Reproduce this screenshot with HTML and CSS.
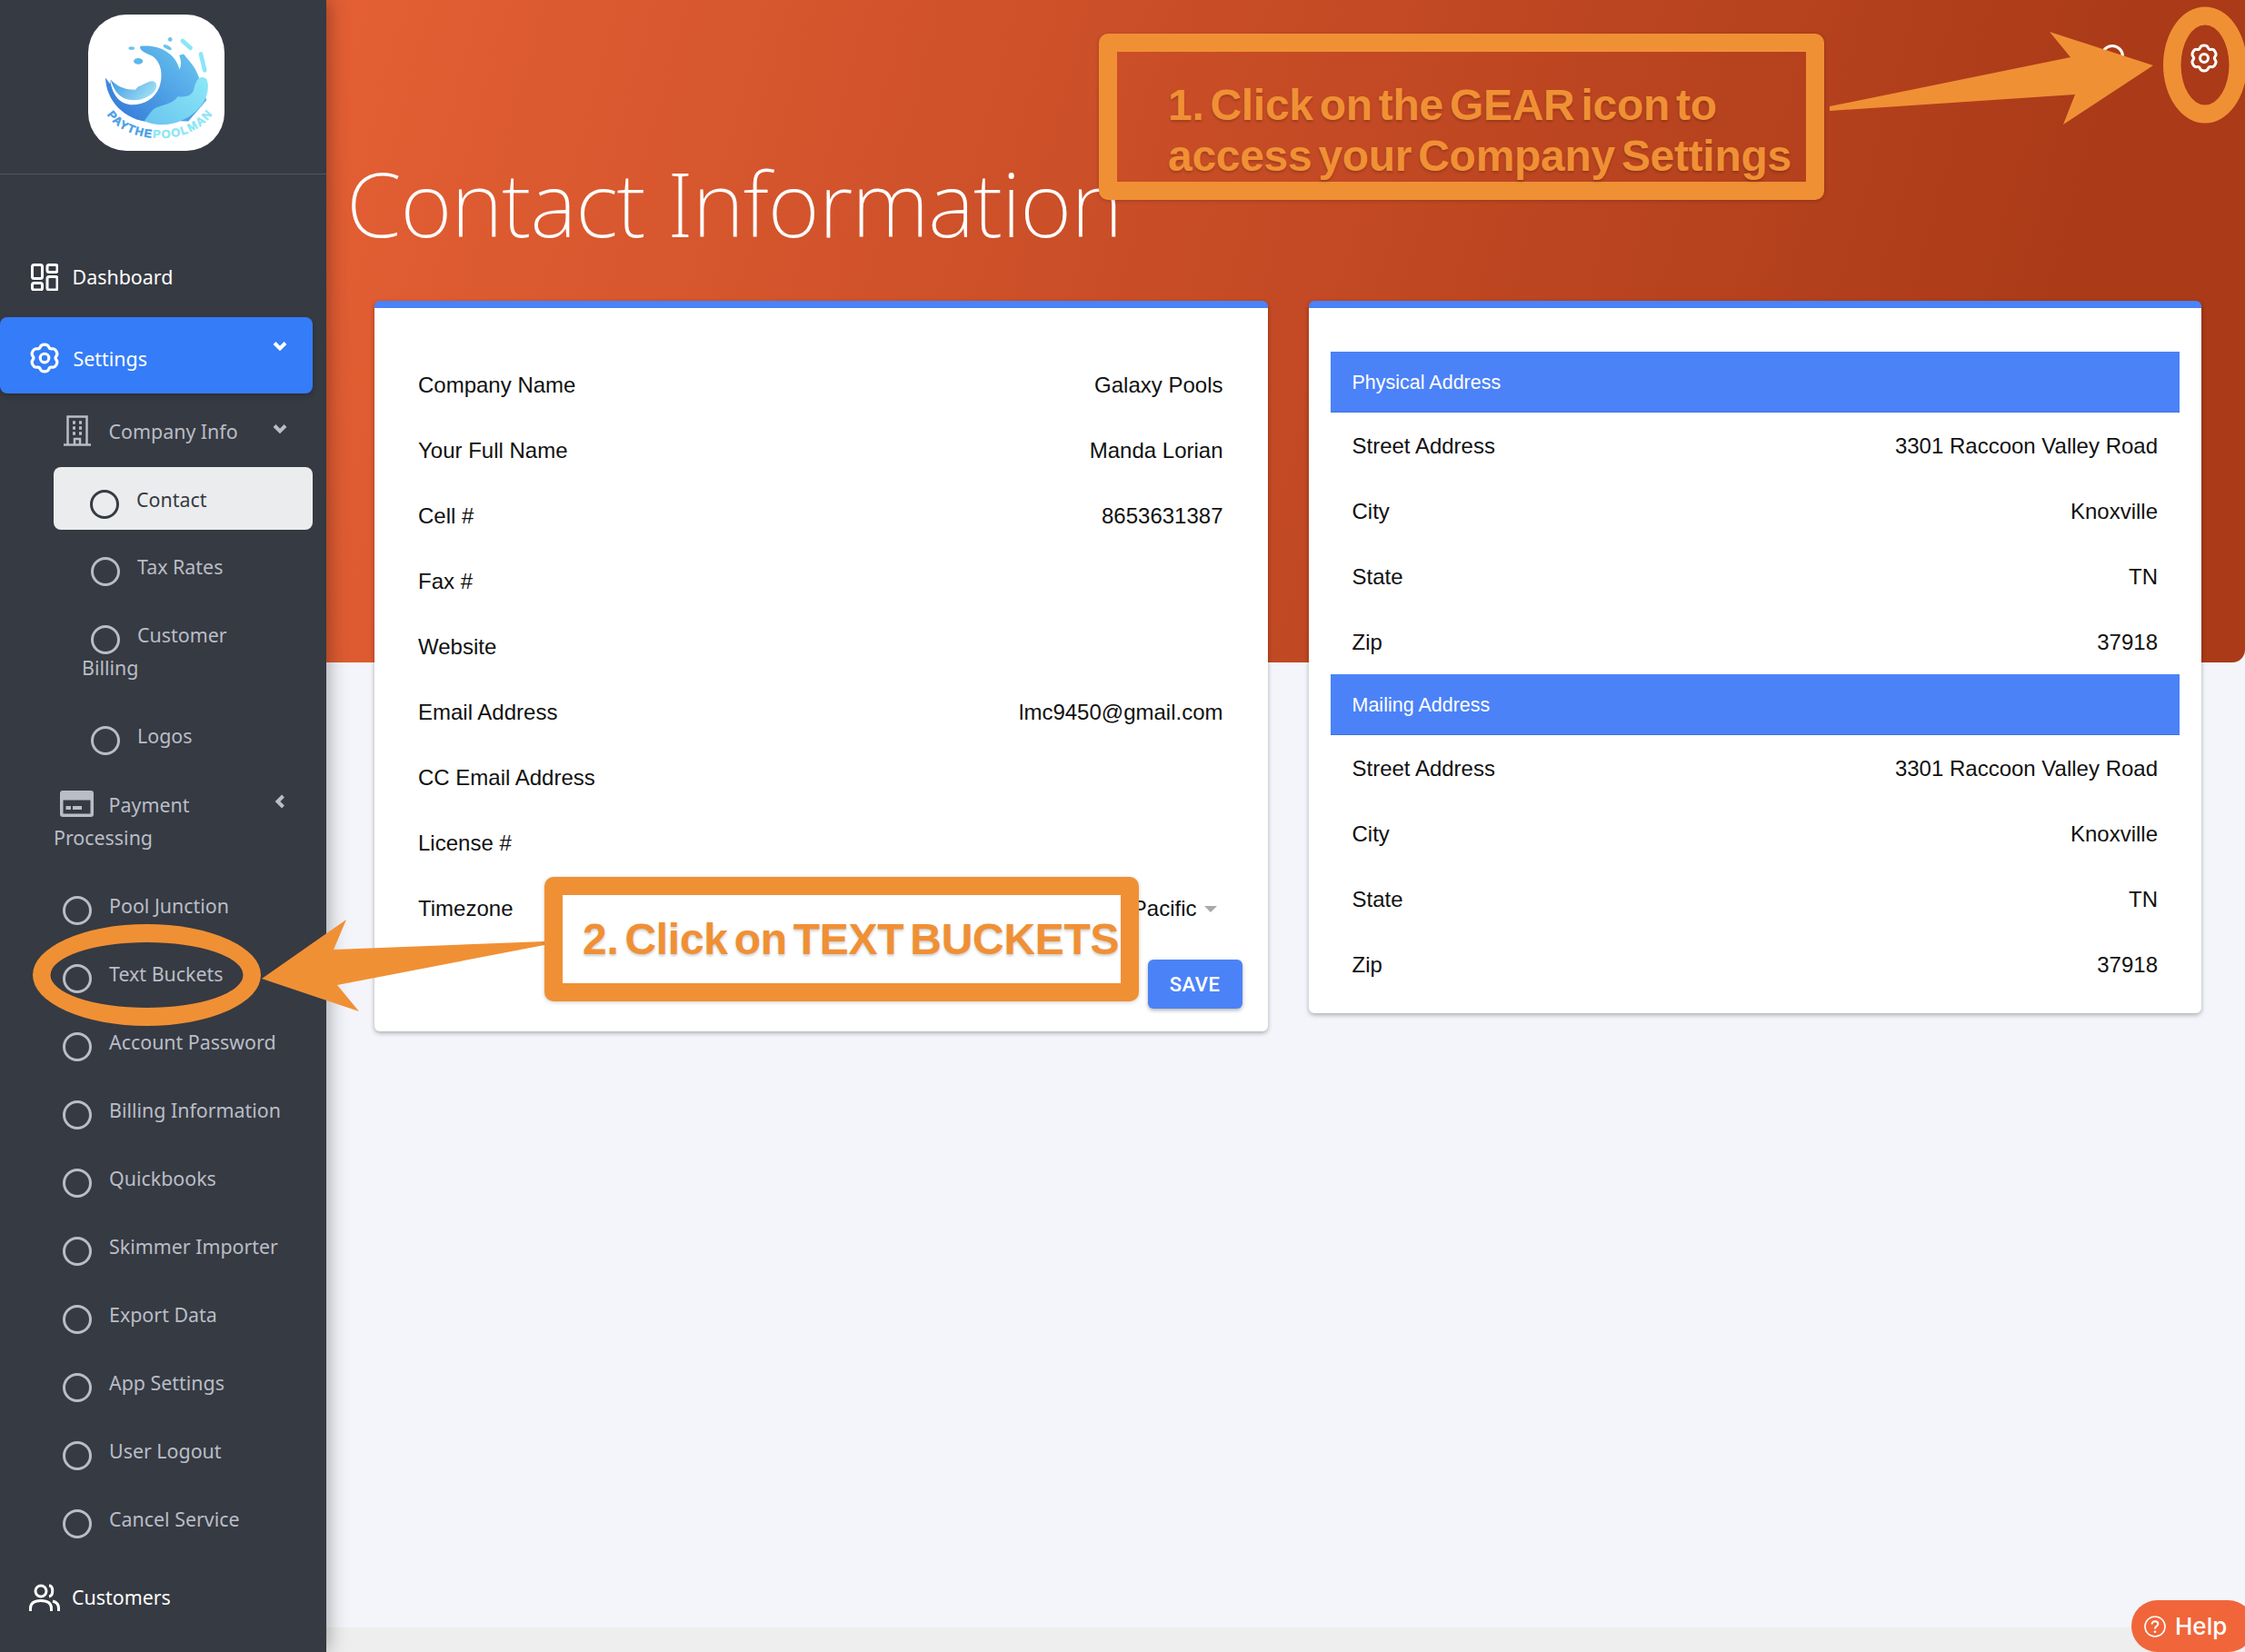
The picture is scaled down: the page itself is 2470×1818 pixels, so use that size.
FILE: index.html
```html
<!DOCTYPE html>
<html lang="en">
<head>
    <meta charset="UTF-8">
    <title>Contact Information</title>
    <link rel="stylesheet" href="styles.css">
</head>
<body>
    <svg class="defs" width="0" height="0">
        <symbol id="gear" viewBox="0 0 32 32">
            <path d="M16 1.93Q19.5 1.93 20.38 4.42Q21.25 6.91 23.84 6.42Q26.43 5.92 28.19 8.96Q29.94 12 28.22 14Q26.5 16 28.22 18Q29.94 20 28.19 23.04Q26.43 26.08 23.84 25.58Q21.25 25.09 20.38 27.58Q19.5 30.07 16 30.07Q12.5 30.07 11.62 27.58Q10.75 25.09 8.16 25.58Q5.57 26.08 3.81 23.04Q2.06 20 3.78 18Q5.5 16 3.78 14Q2.06 12 3.81 8.96Q5.57 5.92 8.16 6.42Q10.75 6.91 11.62 4.42Q12.5 1.93 16 1.93Z" fill="none" stroke="currentColor" stroke-width="3"/>
            <circle cx="16" cy="16" r="4.5" fill="none" stroke="currentColor" stroke-width="3"/>
        </symbol>
        <symbol id="ring" viewBox="0 0 32 32">
            <circle cx="16" cy="16" r="14.5" fill="none" stroke="currentColor" stroke-width="3"/>
        </symbol>
        <symbol id="chevron" viewBox="0 0 16 12">
            <path d="M2 2.5L8 8.5L14 2.5" fill="none" stroke="currentColor" stroke-width="4"/>
        </symbol>
    </svg>

    <div class="app">
        <aside class="sidebar">
            <div class="brand">
                <div class="logo">
                    <svg viewBox="52 48 445 449" width="150" height="150">
                        <defs>
                            <linearGradient id="deep" x1="0" y1="1" x2="1" y2="0">
                                <stop offset="0" stop-color="#2f72d8"/>
                                <stop offset="1" stop-color="#67c4ee"/>
                            </linearGradient>
                            <linearGradient id="inner" x1="0" y1="0" x2="1" y2="0.4">
                                <stop offset="0" stop-color="#3f97e4"/>
                                <stop offset="1" stop-color="#9adcf3"/>
                            </linearGradient>
                            <linearGradient id="mid" x1="0" y1="1" x2="1" y2="0">
                                <stop offset="0" stop-color="#3f8be2"/>
                                <stop offset="1" stop-color="#6cc8f0"/>
                            </linearGradient>
                            <linearGradient id="aqua" x1="0" y1="1" x2="1" y2="0">
                                <stop offset="0" stop-color="#68c4ef"/>
                                <stop offset="1" stop-color="#8ce9f7"/>
                            </linearGradient>
                        </defs>
                        <path d="M107 256C108 330 170 398 255 402C300 404 340 390 365 365L350 225C335 175 285 145 222 152C215 165 240 175 262 185C290 205 298 245 285 285C270 325 235 345 195 345C160 345 130 320 122 262L122 276Z" fill="url(#deep)"/>
                        <path d="M124 262C140 280 165 296 205 296L215 285C235 280 250 265 265 268C278 272 278 290 265 305C240 330 195 338 165 322C145 312 132 290 124 262Z" fill="url(#inner)"/>
                        <path d="M290 345C320 320 325 270 330 226L345 236C355 225 360 210 350 182L365 178C385 205 400 215 415 255L440 330L380 400L250 395Z" fill="url(#mid)"/>
                        <path d="M440 260C415 245 405 265 398 295C390 320 365 320 345 318C330 345 285 345 265 360C250 375 242 390 235 398C290 425 370 410 420 350C445 320 450 285 440 260Z" fill="url(#aqua)"/>
                        <ellipse cx="215" cy="202" rx="15" ry="10" fill="#5cb8ec"/>
                        <ellipse cx="193" cy="159" rx="10" ry="5.5" fill="#6cc3ef"/>
                        <ellipse cx="311" cy="156" rx="15" ry="6" fill="#6cc3ef" transform="rotate(28 311 156)"/>
                        <circle cx="320" cy="130" r="7" fill="#6cc3ef"/>
                        <path d="M361 135L387 158" stroke="#8ae6f7" stroke-width="14" stroke-linecap="round"/>
                        <path d="M421 178L434 232" stroke="#8ae6f7" stroke-width="14" stroke-linecap="round"/>
                        <path id="logo-arc" d="M112 378C170 470 370 490 455 382" fill="none"/>
                        <text class="logo-text"><textPath href="#logo-arc" textLength="395"><tspan fill="#4a9fe8" stroke="#4a9fe8">PAYTHE</tspan><tspan fill="#8ce6f7" stroke="#8ce6f7">POOLMAN</tspan></textPath></text>
                    </svg>
                </div>
            </div>

            <nav class="nav">
                <a class="nav-top">
                    <svg class="dash-icon" viewBox="0 0 30 30" width="30" height="30" fill="none" stroke="currentColor" stroke-width="3">
                        <rect x="1.5" y="1.5" width="11" height="15" rx="2"/>
                        <rect x="18" y="1.5" width="11" height="8" rx="2"/>
                        <rect x="1.5" y="21.5" width="11" height="7.5" rx="2"/>
                        <rect x="18" y="14.5" width="11" height="14.5" rx="2"/>
                    </svg>
                    Dashboard
                </a>
                <a class="nav-top active">
                    <svg class="gear-icon"><use href="#gear"/></svg>
                    Settings
                    <svg class="chevron chevron-active"><use href="#chevron"/></svg>
                </a>

                <a class="sub company-info">
                    <svg class="sub-icon" viewBox="0 0 30 34" fill="none" stroke="currentColor" stroke-width="2.5">
                        <path d="M4.5 32V1.5H25.5V32"/>
                        <path d="M0 32.5H30"/>
                        <path d="M12 32V26H18V32" />
                        <path d="M10 8h3M17 8h3M10 14h3M17 14h3M10 20h3M17 20h3" stroke-width="3.4"/>
                    </svg>
                    Company Info
                    <svg class="chevron"><use href="#chevron"/></svg>
                </a>
                <a class="sub-sub current"><svg class="bullet"><use href="#ring"/></svg>Contact</a>
                <a class="sub-sub"><svg class="bullet"><use href="#ring"/></svg>Tax Rates</a>
                <a class="sub-sub"><svg class="bullet"><use href="#ring"/></svg>Customer Billing</a>
                <a class="sub-sub"><svg class="bullet"><use href="#ring"/></svg>Logos</a>

                <a class="sub">
                    <svg class="sub-icon card-icon" viewBox="0 0 37 29">
                        <path fill-rule="evenodd" fill="currentColor" d="M3 0H34A3 3 0 0 1 37 3V26A3 3 0 0 1 34 29H3A3 3 0 0 1 0 26V3A3 3 0 0 1 3 0ZM3.5 10.5V25.5H33.5V10.5ZM6.5 17H12V21H6.5ZM14 17H24V21H14Z"/>
                    </svg>
                    Payment Processing
                    <svg class="chevron chevron-left"><use href="#chevron"/></svg>
                </a>
                <a class="sub"><svg class="bullet"><use href="#ring"/></svg>Pool Junction</a>
                <a class="sub"><svg class="bullet"><use href="#ring"/></svg>Text Buckets</a>
                <a class="sub"><svg class="bullet"><use href="#ring"/></svg>Account Password</a>
                <a class="sub"><svg class="bullet"><use href="#ring"/></svg>Billing Information</a>
                <a class="sub"><svg class="bullet"><use href="#ring"/></svg>Quickbooks</a>
                <a class="sub"><svg class="bullet"><use href="#ring"/></svg>Skimmer Importer</a>
                <a class="sub"><svg class="bullet"><use href="#ring"/></svg>Export Data</a>
                <a class="sub"><svg class="bullet"><use href="#ring"/></svg>App Settings</a>
                <a class="sub"><svg class="bullet"><use href="#ring"/></svg>User Logout</a>
                <a class="sub"><svg class="bullet"><use href="#ring"/></svg>Cancel Service</a>

                <a class="nav-top customers">
                    <svg class="people-icon" viewBox="0 0 34 30" width="34" height="30" fill="none" stroke="currentColor" stroke-width="3">
                        <circle cx="13" cy="8" r="6"/>
                        <path d="M1.5 30V27C1.5 21 6 18.5 13 18.5C20 18.5 24.5 21 24.5 27V30"/>
                        <path d="M22 1.8C27 2.5 27 13 22 14"/>
                        <path d="M26 19C30 20 32.5 23 32.5 27V30"/>
                    </svg>
                    Customers
                </a>
            </nav>
        </aside>

        <main class="main">
            <header class="page-header">
                <div class="top-icons">
                    <svg class="search-icon" viewBox="0 0 34 34" fill="none" stroke="#fff" stroke-width="3">
                        <circle cx="14" cy="14" r="11.5"/>
                        <path d="M23 23L32 32"/>
                    </svg>
                    <svg class="header-gear"><use href="#gear"/></svg>
                </div>
                <h1>Contact Information</h1>
            </header>

            <div class="cards">
                <section class="card">
                    <div class="rows company">
                        <div class="row"><span>Company Name</span><span>Galaxy Pools</span></div>
                        <div class="row"><span>Your Full Name</span><span>Manda Lorian</span></div>
                        <div class="row"><span>Cell #</span><span>8653631387</span></div>
                        <div class="row"><span>Fax #</span><span></span></div>
                        <div class="row"><span>Website</span><span></span></div>
                        <div class="row"><span>Email Address</span><span>lmc9450@gmail.com</span></div>
                        <div class="row"><span>CC Email Address</span><span></span></div>
                        <div class="row"><span>License #</span><span></span></div>
                        <div class="row"><span>Timezone</span><span class="select">Pacific<i class="caret"></i></span></div>
                    </div>
                    <div class="card-footer">
                        <button class="save">SAVE</button>
                    </div>
                </section>

                <section class="card address">
                    <div class="section-head">Physical Address</div>
                    <div class="row"><span>Street Address</span><span>3301 Raccoon Valley Road</span></div>
                    <div class="row"><span>City</span><span>Knoxville</span></div>
                    <div class="row"><span>State</span><span>TN</span></div>
                    <div class="row"><span>Zip</span><span>37918</span></div>
                    <div class="section-head">Mailing Address</div>
                    <div class="row"><span>Street Address</span><span>3301 Raccoon Valley Road</span></div>
                    <div class="row"><span>City</span><span>Knoxville</span></div>
                    <div class="row"><span>State</span><span>TN</span></div>
                    <div class="row"><span>Zip</span><span>37918</span></div>
                </section>
            </div>

            <footer class="footer"></footer>
        </main>
    </div>

    <a class="help">
        <svg viewBox="0 0 24 24" width="24" height="24" fill="none" stroke="#fff" stroke-width="1.6">
            <circle cx="12" cy="12" r="11"/>
            <path d="M8.6 9.4C8.6 7.4 10.2 6.2 12 6.2C13.9 6.2 15.4 7.4 15.4 9.2C15.4 11.6 12 11.6 12 14.4" stroke-width="2"/>
            <circle cx="12" cy="17.8" r="1.3" fill="#fff" stroke="none"/>
        </svg>
        Help
    </a>

    <!-- annotations drawn on top of the screenshot -->
    <svg class="arrows" viewBox="0 0 2470 1818" width="2470" height="1818">
        <g fill="#f09035">
            <path d="M2013 117L2278 63L2255 35L2369 72L2270 137L2283 104L2013 122Z"/>
            <path fill-rule="evenodd" d="M2426 7.5A46 64 0 0 1 2426 135.5A46 64 0 0 1 2426 7.5ZM2426 27.5A26.5 44 0 0 0 2426 115.5A26.5 44 0 0 0 2426 27.5Z"/>
            <path d="M599 1036L367 1045L381 1012L288 1077L395 1113L371 1084L599 1040Z"/>
            <path fill-rule="evenodd" d="M161.5 1017A125.5 56 0 0 1 161.5 1129A125.5 56 0 0 1 161.5 1017ZM161.5 1037A106 36 0 0 0 161.5 1109A106 36 0 0 0 161.5 1037Z"/>
        </g>
    </svg>
    <div class="callout callout-gear">1. Click on the GEAR icon to<br>access your Company Settings</div>
    <div class="callout callout-buckets">2. Click on TEXT BUCKETS</div>
</body>
</html>
```

FILE: styles.css
```css
* {
    box-sizing: border-box;
}
body {
    margin: 0;
    width: 2470px;
    height: 1818px;
    overflow: hidden;
    position: relative;
    background-color: #f4f5fa;
    color: #111;
    font-family: "Liberation Sans", Arial, sans-serif;
    font-size: 24px;
}
.defs {
    position: absolute;
}
.app {
    display: flex;
    height: 1818px;
}

/* sidebar */
.sidebar {
    width: 359px;
    flex-shrink: 0;
    background-color: #363a42;
    box-shadow: 0 0 22px rgba(0, 0, 0, 0.4);
    position: relative;
    z-index: 2;
    color: #b9bdc7;
    font-family: "Noto Sans", sans-serif;
    font-size: 21.4px;
    line-height: 36px;
}
.brand {
    height: 192px;
    padding: 16px 0 0 97px;
    border-bottom: 1px solid #52565e;
}
.logo {
    width: 150px;
    height: 150px;
    background-color: #fff;
    border-radius: 42px;
    overflow: hidden;
}
.logo svg {
    display: block;
}
.logo-text {
    font-family: "Liberation Sans", sans-serif;
    font-weight: bold;
    font-size: 38px;
    stroke-width: 1.5px;
}
.nav {
    padding-top: 70px;
}
.nav a {
    display: block;
    position: relative;
}
.nav-top {
    color: #fff;
    height: 84px;
    padding: 25px 0 0 34px;
    width: 344px;
    margin-bottom: 3px;
    border-radius: 8px;
}
.nav-top.active {
    background-color: #347cf8;
    padding-top: 28px;
    box-shadow: 0 3px 6px rgba(0, 0, 0, 0.2);
}
.nav-top.customers {
    margin-top: 10px;
    padding-top: 22px;
}
.dash-icon, .people-icon, .gear-icon {
    vertical-align: middle;
    margin: -8px 10px -4px 0;
}
.gear-icon {
    width: 34px;
    height: 34px;
    margin: -10px 9px -4px -2px;
}
.people-icon {
    margin-left: -2px;
    margin-right: 7.5px;
}
.sub {
    padding: 20.5px 30px 18.5px 59px;
    width: 344px;
}
.company-info {
    padding-top: 21px;
    padding-bottom: 18px;
}
.sub-sub {
    padding: 20px 50px 19px 90px;
    width: 344px;
}
.bullet {
    width: 32px;
    height: 32px;
    margin: -14px 19px -4px 10px;
    vertical-align: -9px;
}
.sub-icon {
    vertical-align: middle;
    margin: -10px 14px -4px 11px;
    width: 30px;
    height: 34px;
}
.card-icon {
    width: 37px;
    height: 29px;
    margin: -10px 11px -4px 7px;
}
.sub-sub.current {
    background-color: #ebecee;
    color: #363a42;
    height: 69px;
    margin: 3px 0 3px 59px;
    width: 285px;
    padding: 18px 30px 0 30px;
    border-radius: 8px;
}
.chevron {
    position: absolute;
    right: 28px;
    top: 30px;
    width: 16px;
    height: 12px;
}
.chevron-active {
    top: 26px;
    color: #fff;
}
.chevron-left {
    transform: rotate(90deg);
    top: 29px;
}

/* page */
.main {
    flex: 1;
    display: flex;
    flex-direction: column;
    min-width: 0;
}
.page-header {
    height: 729px;
    background: linear-gradient(105deg, #e45f34 0%, #aa3a18 88%);
    border-bottom-right-radius: 14px;
    padding-top: 48px;
}
.top-icons {
    display: flex;
    justify-content: flex-end;
    gap: 65px;
    padding-right: 29px;
    height: 34px;
}
.search-icon {
    width: 34px;
    height: 34px;
}
.header-gear {
    width: 32px;
    height: 32px;
    color: #fff;
}
h1 {
    margin: 91px 0 0 22px;
    color: #fff;
    font-family: "Noto Sans", sans-serif;
    font-weight: 200;
    font-size: 98px;
    line-height: 100px;
    letter-spacing: -1.1px;
}
.cards {
    display: grid;
    grid-template-columns: 1fr 1fr;
    align-items: start;
    gap: 45px;
    margin: -398px 48px 0 53px;
}
.card {
    background-color: #fff;
    border-top: 8px solid #4b82f8;
    border-radius: 6px;
    box-shadow: 0 2px 5px rgba(0, 0, 0, 0.3);
}
.company {
    padding: 49px 49px 0 48px;
}
.row {
    display: flex;
    justify-content: space-between;
    align-items: center;
    height: 72px;
}
.select {
    display: flex;
    align-items: center;
    gap: 8px;
    padding-right: 7px;
}
.caret {
    border-left: 7px solid transparent;
    border-right: 7px solid transparent;
    border-top: 7px solid #aaa;
}
.card-footer {
    display: flex;
    justify-content: flex-end;
    padding: 20px 28px 25px 0;
}
.save {
    width: 104px;
    height: 54px;
    background-color: #4b82f8;
    color: #fff;
    border: none;
    border-radius: 6px;
    font-family: Roboto, sans-serif;
    font-weight: 500;
    font-size: 22px;
    letter-spacing: 0.5px;
    box-shadow: 0 2px 4px rgba(0, 0, 0, 0.3);
}
.address {
    padding: 48px 24px 18px;
}
.address .row {
    padding: 2px 24px 0;
}
.section-head {
    height: 67px;
    line-height: 69px;
    padding-left: 24px;
    background-color: #4b82f8;
    border-bottom: 1px solid #3f73e0;
    color: #fff;
    font-size: 21.5px;
}
.footer {
    margin-top: auto;
    height: 27px;
    background-color: #eeeeee;
}
.help {
    position: absolute;
    left: 2345px;
    top: 1761px;
    width: 135px;
    height: 57px;
    padding-left: 14px;
    display: flex;
    align-items: center;
    gap: 10px;
    background-color: #f0663a;
    border-radius: 30px;
    color: #fff;
    font-family: Inter, sans-serif;
    font-weight: 500;
    font-size: 26px;
    z-index: 3;
}

/* annotations */
.arrows {
    position: absolute;
    left: 0;
    top: 0;
    z-index: 5;
    pointer-events: none;
}
.callout {
    position: absolute;
    z-index: 6;
    border: 20px solid #f09035;
    border-radius: 10px;
    color: #f09035;
    font-weight: bold;
    font-size: 48px;
    letter-spacing: -0.3px;
    word-spacing: -6px;
    text-shadow: 0 2px 3px rgba(0, 0, 0, 0.2);
    box-shadow: 0 1px 4px rgba(0, 0, 0, 0.2);
}
.callout-gear {
    left: 1209px;
    top: 37px;
    width: 798px;
    height: 183px;
    padding: 31px 0 0 56px;
    line-height: 56px;
}
.callout-buckets {
    left: 599px;
    top: 965px;
    width: 654px;
    height: 137px;
    padding: 22px 0 0 22px;
    line-height: 54px;
    background-color: #fff;
    white-space: nowrap;
}
```
